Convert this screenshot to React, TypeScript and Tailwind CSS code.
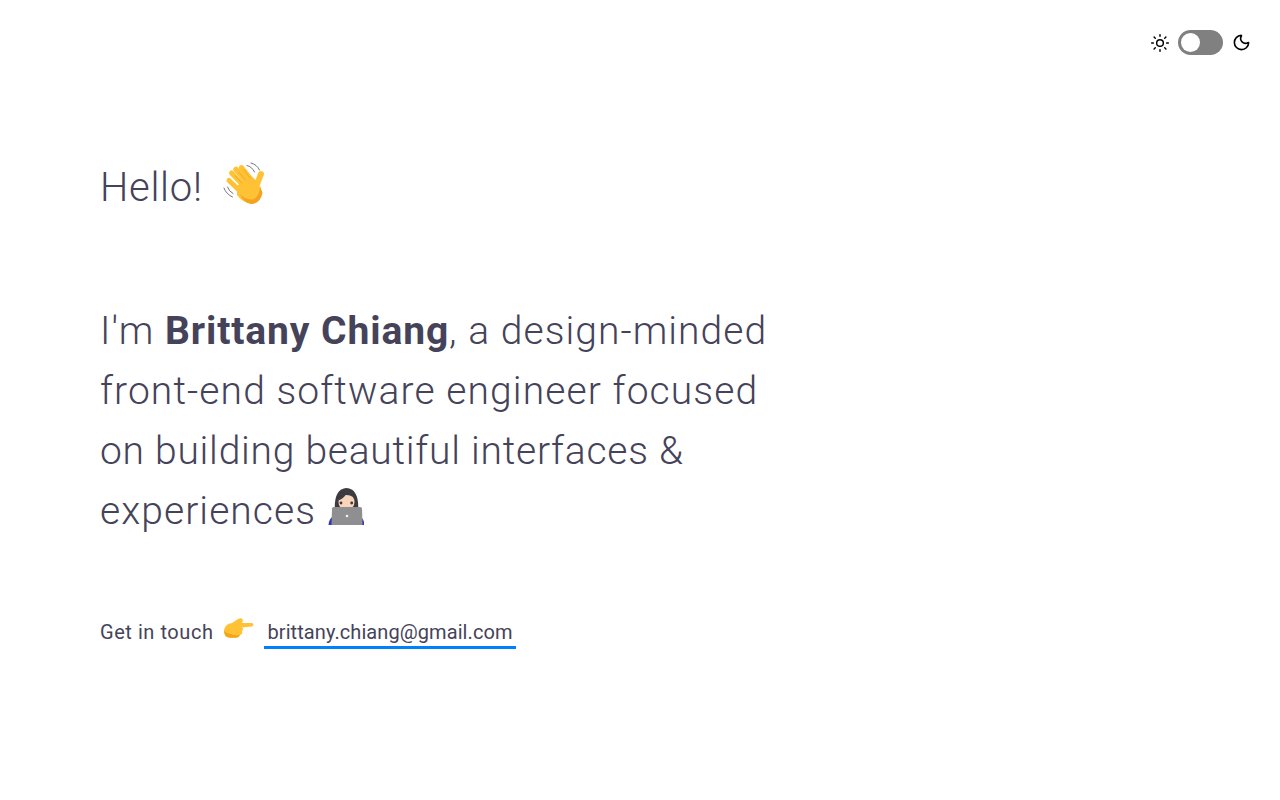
import { Moon, Sun } from 'lucide-react';

function WaveEmoji() {
    return (
        <svg viewBox="0 0 44 44" className="h-[44px] w-[44px] shrink-0" fill="none">
            <g strokeLinecap="round" stroke="#FFC235">
                <path d="M8.5 11 L21 24" strokeWidth="5" />
                <path d="M13 7.5 L25 21" strokeWidth="5.5" />
                <path d="M18.5 6 L29 19" strokeWidth="5.5" />
                <path d="M6 18.5 L18 30" strokeWidth="5" />
                <path d="M38 12 L33 25" strokeWidth="6" />
            </g>
            <path d="M14 24 L27 13 L35 20 L39 31 Q37 41 28 41.5 Q20 41 14 33 Z" fill="#FFC235" />
            <path d="M17 32 Q23 39 31 37 Q37 33 37 24 L39.5 31 Q37 42 28 42 Q21 41 17 32 Z" fill="#F4A21F" />
            <path d="M12 14 L19 21 M16 10.5 L23 18.5 M21 8 L27 16" stroke="#EFA21E" strokeWidth="0.8" strokeLinecap="round" />
            <path d="M24 3.5 Q29 4.5 31.5 10 M28 1 Q34 2.5 36.5 8" stroke="#77777d" strokeWidth="1" strokeLinecap="round" />
            <path d="M1 26 Q3 32 9.5 35 M4.5 25 Q6 29.5 10 31.5" stroke="#77777d" strokeWidth="1" strokeLinecap="round" />
        </svg>
    );
}

function TechnologistEmoji() {
    return (
        <svg viewBox="0 0 36 40" className="h-[40px] w-[36px] shrink-0" fill="none">
            <path d="M0.5 38 Q1 31 6 29 L31 29 Q36 31 36.5 38 Z" fill="#2F38B5" />
            <path d="M7 26 Q5 2 18.5 1 Q32 2 30 26 Z" fill="#3C3C40" />
            <path d="M10.5 15 Q10.5 8 18.5 8 Q26.5 8 26.5 15 Q26.5 22 18.5 23 Q10.5 22 10.5 15 Z" fill="#F7D5BD" />
            <path d="M10 13.5 Q15.5 12 18.5 6.5 L12.5 6.5 Z" fill="#3C3C40" />
            <circle cx="13" cy="16" r="1.4" fill="#4a3428" />
            <circle cx="23.7" cy="16" r="1.4" fill="#4a3428" />
            <path d="M4 21.5 Q4 20 6 20 L32 20 Q34 20 34 21.5 L34.5 38 L3.5 38 Z" fill="#8F8F92" />
            <circle cx="19" cy="29" r="1.3" fill="#f2f2f2" />
        </svg>
    );
}

function PointEmoji() {
    return (
        <svg viewBox="0 0 32 24" className="h-[24px] w-[32px] shrink-0" fill="none">
            <path d="M1 13 Q2 7 9 6 L15 2 Q19 0 20 3 L19 6 L29 6 Q32 7.5 29 9.5 L19 10.5 Q21 12 19 14 Q20 17 17 18 Q16 21 12 21 L7 21 Q0 20 1 13 Z" fill="#FFC235" />
            <path d="M1 14 Q2 20 7 20.5 L13 20.5 Q16 20 17 18 Q11 19 8 17 Q4 17 1 14 Z" fill="#F4A21F" />
        </svg>
    );
}

export default function App() {
    return (
        <div className="min-h-[800px] bg-white font-['Roboto','Liberation_Sans',sans-serif] text-[#45435a]">
            <header className="flex items-center justify-end pt-[30px] pr-[29px]">
                <Sun className="mr-[8px] h-[20px] w-[20px] text-black" strokeWidth={1.75} />
                <div className="flex h-[25px] w-[45px] items-center rounded-full bg-[#808080] pl-[3px]">
                    <div className="h-[19px] w-[19px] rounded-full bg-white" />
                </div>
                <Moon className="ml-[9px] h-[19px] w-[19px] text-black" strokeWidth={2} />
            </header>
            <main className="px-[100px] pt-[107px]">
                <h1 className="flex h-[44px] items-start text-[40px] font-light leading-[52px] tracking-[0.7px]">
                    <span>Hello!</span>
                    <span className="ml-[20px]"><WaveEmoji /></span>
                </h1>
                <p className="mt-[95px] text-[39px] font-light leading-[60px] tracking-[1.05px]">
                    I'm <strong className="font-bold tracking-[0.9px]">Brittany Chiang</strong>, a design-minded
                    <br />
                    <span className="tracking-[1.1px]">front-end software engineer focused</span>
                    <br />
                    <span className="tracking-[0.75px]">on building beautiful interfaces &amp;</span>
                    <br />
                    <span className="inline-flex items-center">
                        experiences
                        <span className="ml-[12px] -translate-y-[4px]"><TechnologistEmoji /></span>
                    </span>
                </p>
                <div className="mt-[74px] flex items-start text-[20px] leading-[27px]">
                    <span className="mt-[4px] tracking-[0.55px]">Get in touch</span>
                    <span className="ml-[10px] mt-[2px]"><PointEmoji /></span>
                    <a href="#" className="ml-[9px] border-b-[3px] border-[#007fff] px-[3px] pt-[4px] tracking-[0.08px]">
                        brittany.chiang@gmail.com
                    </a>
                </div>
            </main>
        </div>
    );
}
